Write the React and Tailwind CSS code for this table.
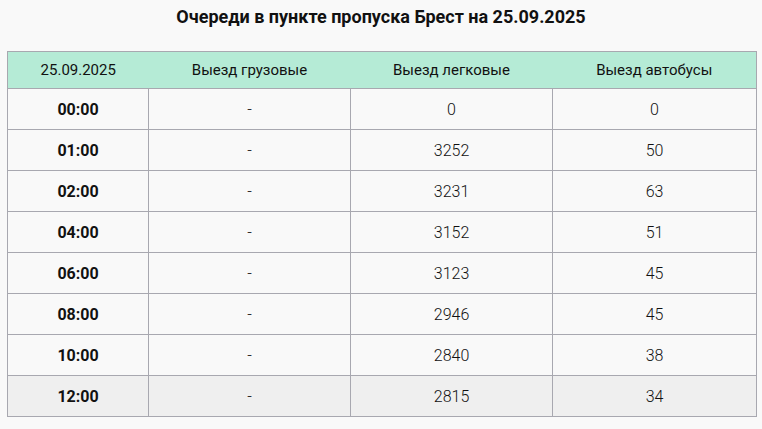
import React from 'react';

const rows = [
  ['00:00', '-', '0', '0'],
  ['01:00', '-', '3252', '50'],
  ['02:00', '-', '3231', '63'],
  ['04:00', '-', '3152', '51'],
  ['06:00', '-', '3123', '45'],
  ['08:00', '-', '2946', '45'],
  ['10:00', '-', '2840', '38'],
  ['12:00', '-', '2815', '34'],
];

function App() {
  return (
    <div className="min-h-[429px] bg-[#f9f9f9] pt-[5px] text-[#111]" style={{ fontFamily: 'Roboto, sans-serif' }}>
      {/* Title */}
      <h1 className="text-center text-[18px] font-bold leading-[24px] text-[#111]">
        Очереди в пункте пропуска Брест на 25.09.2025
      </h1>

      {/* Queue table */}
      <div className="px-[7px] pt-[22px]">
        <table className="w-[750px] border-collapse border border-[#a8a8b0] text-center">
          <thead>
            <tr className="bg-[#b5ebd6] h-[37px] text-[15px] font-normal text-[#111]">
              <th className="w-[141px] font-normal">25.09.2025</th>
              <th className="w-[202px] font-normal">Выезд грузовые</th>
              <th className="w-[202px] font-normal">Выезд легковые</th>
              <th className="font-normal">Выезд автобусы</th>
            </tr>
          </thead>
          <tbody>
            {rows.map((r, i) => (
              <tr key={r[0]} className={i === rows.length - 1 ? 'bg-[#efefef] h-[41px]' : 'bg-[#f9f9f9] h-[41px]'}>
                <td className="border border-[#a8a8b0] pt-[2px] text-[16px] font-bold">{r[0]}</td>
                <td className="border border-[#a8a8b0] pt-[2px] text-[16px] font-light">{r[1]}</td>
                <td className="border border-[#a8a8b0] pt-[2px] text-[16px] font-light">{r[2]}</td>
                <td className="border border-[#a8a8b0] pt-[2px] text-[16px] font-light">{r[3]}</td>
              </tr>
            ))}
          </tbody>
        </table>
      </div>
    </div>
  );
}

export default App;
